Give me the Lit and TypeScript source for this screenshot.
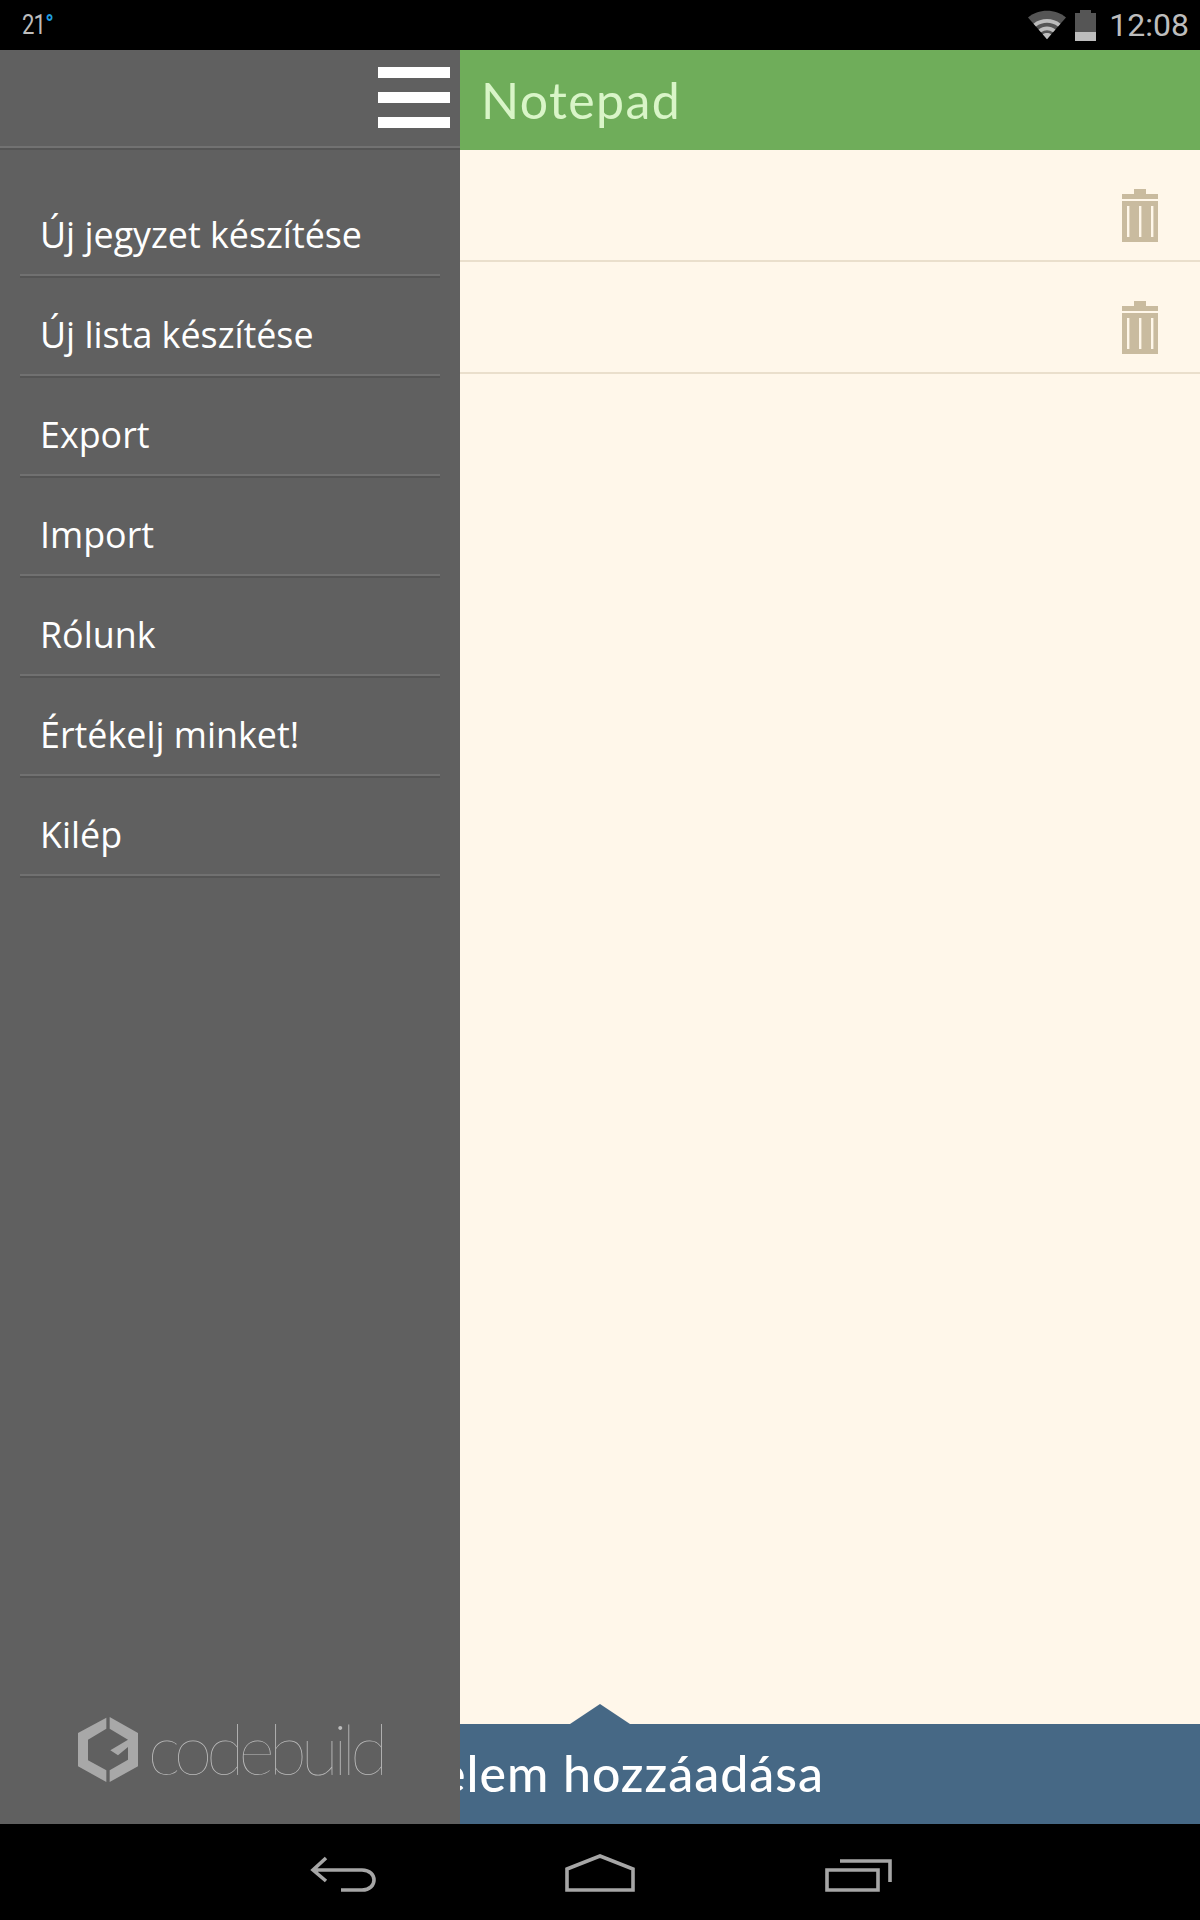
import { LitElement, html, css, svg } from 'lit';
import { customElement } from 'lit/decorators.js';

const MENU = ['Új jegyzet készítése', 'Új lista készítése', 'Export', 'Import', 'Rólunk', 'Értékelj minket!', 'Kilép'];
const ROWS = [0, 1];

const trashIcon = svg`
  <svg class="trash" viewBox="0 0 36 53" width="36" height="53">
    <path fill="#c9bb9f" fill-rule="evenodd" d="M12 0h12v5h12v5H0V5h12zM0 12h36v41H0zM5 17v31h2.4V17zM17 17v31h2.4V17zM29 17v31h2.4V17z"/>
  </svg>`;

@customElement('app-root')
export class AppRoot extends LitElement {
  static styles = css`
    :host {
      display: block;
      width: 1200px;
      height: 1920px;
      background: #000;
      font-family: 'Open Sans', sans-serif;
    }

    .status {
      height: 50px;
      display: flex;
      align-items: center;
      padding: 0 11px 0 22px;
      color: #bdbdbd;
    }

    .temp {
      font-family: 'Liberation Sans Narrow', 'Roboto', sans-serif;
      font-size: 27px;
      display: inline-block;
      transform: scaleX(0.82);
      transform-origin: left center;
      letter-spacing: -1px;
    }

    .temp span {
      color: #1f9fe0;
      font-weight: 700;
    }

    .status-right {
      margin-left: auto;
      display: flex;
      align-items: center;
      gap: 9px;
    }

    .clock {
      font-family: Roboto, sans-serif;
      font-size: 32px;
      margin-left: 4px;
      line-height: 50px;
    }

    .body {
      height: 1774px;
      display: flex;
    }

    .drawer {
      width: 460px;
      flex: none;
      background: #606060;
      display: flex;
      flex-direction: column;
    }

    .drawer-head {
      height: 98px;
      border-bottom: 2px solid #727272;
      box-shadow: 0 2px 0 #555;
      margin-bottom: 2px;
      display: flex;
      flex-direction: column;
      align-items: flex-end;
      gap: 14px;
      padding: 17px 10px 0 0;
      box-sizing: border-box;
    }

    .drawer-head i {
      display: block;
      width: 72px;
      height: 11px;
      background: #fff;
    }

    .menu {
      margin: 27px 20px 0;
      padding: 0;
      list-style: none;
    }

    .menu li {
      height: 73px;
      padding: 24px 0 0 20px;
      margin-top: 1px;
      border-bottom: 2px solid #717171;
      box-shadow: 0 2px 0 #555;
      font-size: 35.85px;
      line-height: 68px;
      color: #fff;
    }

    .menu li:first-child {
      margin-top: 0;
    }

    .logo {
      margin-top: auto;
      margin-bottom: 42px;
      display: flex;
      align-items: flex-end;
      justify-content: center;
      gap: 10px;
      color: #bcbcbc;
    }

    .logo-text {
      font-family: Lato, sans-serif;
      font-weight: 100;
      font-size: 70px;
      line-height: 62px;
      letter-spacing: -5.9px;
      margin-bottom: 3px;
    }

    .main {
      flex: 1;
      min-width: 0;
      display: flex;
      flex-direction: column;
      background: #fff7ea;
      overflow: hidden;
    }

    .title {
      height: 100px;
      flex: none;
      background: #6fad5a;
      color: #d9f5c8;
      font-family: Lato, sans-serif;
      font-size: 50px;
      letter-spacing: 1.4px;
      line-height: 100px;
      padding-left: 21px;
    }

    .row {
      height: 71px;
      flex: none;
      border-bottom: 2px solid #eadfcc;
      display: flex;
      justify-content: flex-end;
      padding: 39px 42px 0 0;
    }

    .add {
      margin-top: auto;
      position: relative;
      height: 100px;
      flex: none;
      background: #466885;
      color: #fff;
      font-family: Lato, sans-serif;
      font-weight: 500;
      font-size: 50px;
      letter-spacing: 1px;
      line-height: 98px;
      white-space: nowrap;
      display: flex;
      justify-content: flex-end;
      padding-right: 376px;
    }

    .add::before {
      content: '';
      position: absolute;
      left: 110px;
      top: -20px;
      width: 60px;
      height: 20px;
      background: #466885;
      clip-path: polygon(0 100%, 50% 0, 100% 100%);
    }

    .nav {
      height: 96px;
      display: block;
    }
  `;

  render() {
    return html`
      <div class="status">
        <span class="temp">21<span>°</span></span>
        <div class="status-right">
          <svg width="38" height="30" viewBox="0 0 38 30">
            <path fill="#555" d="M0 7.5C10-1.5 28-1.5 38 7.5L19 29z"/>
            <path fill="#bdbdbd" d="M5.5 13.7C13 7.5 25 7.5 32.5 13.7L30 16.5C23.5 11.5 14.5 11.5 8 16.5zM10.5 19.5C15.5 15.6 22.5 15.6 27.5 19.5L25 22.3C21 19.6 17 19.6 13 22.3zM14.7 24.3C17.2 22.5 20.8 22.5 23.3 24.3L19 29.3z"/>
          </svg>
          <svg width="21" height="31" viewBox="0 0 21 31">
            <path fill="#555" d="M5 0h11v3h5v19H0V3h5z"/>
            <rect y="22" width="21" height="9" fill="#bdbdbd"/>
          </svg>
          <span class="clock">12:08</span>
        </div>
      </div>
      <div class="body">
        <aside class="drawer">
          <div class="drawer-head"><i></i><i></i><i></i></div>
          <ul class="menu">
            ${MENU.map((item) => html`<li>${item}</li>`)}
          </ul>
          <div class="logo">
            <svg width="60" height="65" viewBox="115 80 180 195">
              <path fill="#a8a8a8" d="M200 82L115 128V228L200 275V240L145 210V148L200 115z"/>
              <path fill="#a8a8a8" d="M210 80L295 128V228L210 275V240L265 208V170L235 195L212 180L265 148L210 115z"/>
            </svg>
            <span class="logo-text">codebuild</span>
          </div>
        </aside>
        <section class="main">
          <div class="title">Notepad</div>
          ${ROWS.map(() => html`<div class="row">${trashIcon}</div>`)}
          <div class="add">Új elem hozzáadása</div>
        </section>
      </div>
      <svg class="nav" width="1200" height="96" viewBox="0 1824 1200 96" fill="none" stroke="#a6a6a6" stroke-width="3.6">
        <path d="M326 1858L313 1870L326 1881M313 1870H362C378 1870 378 1890 362 1890H341"/>
        <path d="M567 1869L600 1856L633 1869V1890H567z"/>
        <path d="M827 1870H878V1890H827zM840 1861H890V1882"/>
      </svg>
    `;
  }
}
